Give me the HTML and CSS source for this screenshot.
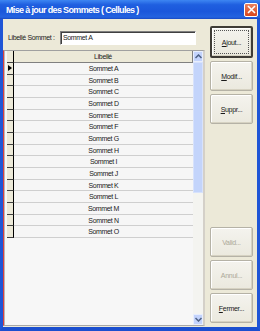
FILE: index.html
```html
<!DOCTYPE html>
<html lang="fr">
<head>
    <meta charset="UTF-8">
    <title>Mise à jour des Sommets</title>
    <link rel="stylesheet" href="styles.css">
</head>
<body>
    <div class="window">
        <div class="title-bar">
            <span class="title">Mise à jour des Sommets ( Cellules )</span>
            <span class="close-btn">
                <svg width="9" height="9" viewBox="0 0 9 9"><path d="M1 1 L8 8 M8 1 L1 8" stroke="#fff" stroke-width="1.6"/></svg>
            </span>
        </div>
        <div class="client">
            <div class="main">
                <div class="field">
                    <label for="libelle">Libellé Sommet :</label>
                    <input type="text" id="libelle" value="Sommet A">
                </div>
                <div class="grid">
                    <div class="grid-body">
                        <div class="grid-row head">
                            <div class="sel"></div>
                            <div class="cell">Libellé</div>
                        </div>
                        <div class="grid-row current"><div class="sel"><span class="arrow"></span></div><div class="cell">Sommet A</div></div>
                        <div class="grid-row"><div class="sel"></div><div class="cell">Sommet B</div></div>
                        <div class="grid-row"><div class="sel"></div><div class="cell">Sommet C</div></div>
                        <div class="grid-row"><div class="sel"></div><div class="cell">Sommet D</div></div>
                        <div class="grid-row"><div class="sel"></div><div class="cell">Sommet E</div></div>
                        <div class="grid-row"><div class="sel"></div><div class="cell">Sommet F</div></div>
                        <div class="grid-row"><div class="sel"></div><div class="cell">Sommet G</div></div>
                        <div class="grid-row"><div class="sel"></div><div class="cell">Sommet H</div></div>
                        <div class="grid-row"><div class="sel"></div><div class="cell">Sommet I</div></div>
                        <div class="grid-row"><div class="sel"></div><div class="cell">Sommet J</div></div>
                        <div class="grid-row"><div class="sel"></div><div class="cell">Sommet K</div></div>
                        <div class="grid-row"><div class="sel"></div><div class="cell">Sommet L</div></div>
                        <div class="grid-row"><div class="sel"></div><div class="cell">Sommet M</div></div>
                        <div class="grid-row"><div class="sel"></div><div class="cell">Sommet N</div></div>
                        <div class="grid-row"><div class="sel"></div><div class="cell">Sommet O</div></div>
                    </div>
                    <div class="scrollbar">
                        <div class="sb-btn">
                            <svg width="7" height="5" viewBox="0 0 7 5"><path d="M0.5 4 L3.5 1 L6.5 4" fill="none" stroke="#4d6185" stroke-width="1.5"/></svg>
                        </div>
                        <div class="sb-track">
                            <div class="sb-thumb"></div>
                        </div>
                        <div class="sb-btn">
                            <svg width="7" height="5" viewBox="0 0 7 5"><path d="M0.5 1 L3.5 4 L6.5 1" fill="none" stroke="#4d6185" stroke-width="1.5"/></svg>
                        </div>
                    </div>
                </div>
            </div>
            <div class="buttons">
                <div class="btn-group">
                    <button class="btn default"><span class="focus"><u>A</u>jout...</span></button>
                    <button class="btn"><u>M</u>odif...</button>
                    <button class="btn"><u>S</u>uppr...</button>
                </div>
                <div class="btn-group">
                    <button class="btn" disabled>Valid...</button>
                    <button class="btn" disabled>Annul...</button>
                    <button class="btn"><u>F</u>ermer...</button>
                </div>
            </div>
        </div>
    </div>
</body>
</html>
```

FILE: styles.css
```css
* {
    box-sizing: border-box;
    margin: 0;
    padding: 0;
}

body {
    width: 260px;
    height: 331px;
    overflow: hidden;
    font-family: "Liberation Sans", Arial, sans-serif;
    font-size: 7px;
    letter-spacing: -0.35px;
    color: #1a1a1a;
    background: #ece9d8;
}

.window {
    height: 331px;
    display: flex;
    flex-direction: column;
    border-left: 3px solid #1f55d6;
    border-right: 3px solid #1f55d6;
    border-bottom: 4px solid #1b4fcf;
}

.title-bar {
    height: 19px;
    margin: 0 -3px;
    padding: 0 2px 0 6px;
    display: flex;
    align-items: center;
    justify-content: space-between;
    background: linear-gradient(to bottom, #3d86f2 0%, #1f5fe0 25%, #1b57db 60%, #2463e0 90%, #1848c2 100%);
}

.title {
    color: #fff;
    font-weight: bold;
    font-size: 9px;
    letter-spacing: -0.65px;
}

.close-btn {
    width: 14px;
    height: 14px;
    display: flex;
    align-items: center;
    justify-content: center;
    border: 1px solid #fff;
    border-radius: 2px;
    background: linear-gradient(to bottom, #e9805e, #d9461d);
}

.client {
    flex: 1;
    display: flex;
    background: #ece9d8;
}

.main {
    width: 202px;
    display: flex;
    flex-direction: column;
}

.field {
    height: 31px;
    display: flex;
    align-items: center;
    padding: 6px 0 0 5px;
}

.field label {
    width: 52px;
    white-space: nowrap;
}

.field input {
    width: 136px;
    height: 14px;
    padding: 0 2px;
    font-family: inherit;
    font-size: 7px;
    letter-spacing: -0.35px;
    color: #1a1a1a;
    background: #fff;
    border: 1px solid;
    border-color: #7f7f7f #ffffff #ffffff #7f7f7f;
    box-shadow: inset 1px 1px 0 #404040;
}

.grid {
    height: 276px;
    display: flex;
    border-left: 1px solid #d94040;
    border-top: 1px solid #a0a0a0;
    border-right: 2px solid #d4d0c8;
    border-bottom: 1px solid #a8a8a8;
    background: #f7f7f7;
}

.grid-body {
    flex: 1;
    padding-left: 3px;
    background: #f7f7f7;
    box-shadow: inset 1px 0 0 #b8b8b8;
}

.grid-row {
    display: flex;
    height: 11.67px;
    line-height: 11px;
}

.grid-row.head {
    height: 12px;
}

.sel {
    width: 7px;
    background: #ece9d8;
    border-right: 1px solid #000;
    border-bottom: 1px solid #404040;
    display: flex;
    align-items: center;
}

.arrow {
    width: 0;
    height: 0;
    border-top: 3px solid transparent;
    border-bottom: 3px solid transparent;
    border-left: 4px solid #000;
    margin-left: 1px;
}

.cell {
    flex: 1;
    text-align: center;
    background: #f6f6f6;
    border-bottom: 1px solid #cfcfcf;
}

.head .cell {
    background: #ece9d8;
    border-bottom: 1px solid #808080;
    border-right: 1px solid #808080;
}

.scrollbar {
    width: 10px;
    display: flex;
    flex-direction: column;
    background: #f4f4f0;
}

.sb-btn {
    height: 11px;
    display: flex;
    align-items: center;
    justify-content: center;
    background: #c3d3fc;
    border: 1px solid #e8eefc;
}

.sb-track {
    flex: 1;
}

.sb-thumb {
    height: 131px;
    background: #c3d4fb;
    border: 1px solid #d7e2fc;
}

.buttons {
    flex: 1;
    display: flex;
    flex-direction: column;
    justify-content: space-between;
    padding: 7px 4px 4px 5px;
}

.btn-group {
    display: flex;
    flex-direction: column;
    gap: 3px;
}

.btn {
    height: 30px;
    font-family: inherit;
    font-size: 7px;
    letter-spacing: -0.3px;
    color: #1a1a1a;
    background: linear-gradient(to bottom, #f4f3ee, #ebe9de);
    border: 1px solid #b5b2a6;
    border-radius: 2px;
    box-shadow: inset -1px -1px 0 #d6d2c2, inset 1px 1px 0 #ffffff;
}

.btn.default {
    height: 32px;
    border: 2px solid #3f3c36;
    padding: 2px;
}

.focus {
    display: flex;
    height: 100%;
    align-items: center;
    justify-content: center;
    border: 1px dotted #555;
}

.btn:disabled {
    color: #aca899;
}
```
